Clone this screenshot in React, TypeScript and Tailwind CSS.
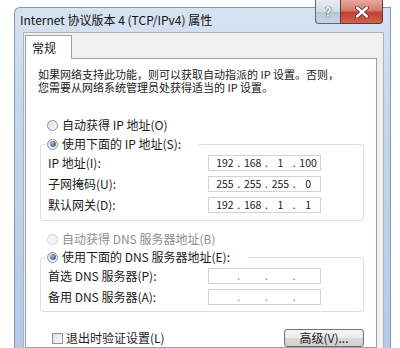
import { Fragment } from 'react'

const cjk = "font-['Noto_Sans_CJK_SC','Noto_Sans',sans-serif]"

function Radio({ checked, disabled }: { checked?: boolean; disabled?: boolean }) {
  return (
    <span
      className={
        disabled
          ? 'flex h-[11px] w-[11px] shrink-0 items-center justify-center rounded-full border border-[#cdd1d5] bg-[#f3f4f5]'
          : 'flex h-[11px] w-[11px] shrink-0 items-center justify-center rounded-full border border-[#8c9096] bg-[linear-gradient(135deg,#d9dcdf,#fbfbfb)]'
      }
    >
      {checked && (
        <span className="h-[6px] w-[6px] rounded-full bg-[radial-gradient(circle_at_35%_35%,#9cbcd8,#22466a)]" />
      )}
    </span>
  )
}

function IpBox({ parts }: { parts?: string[] }) {
  const p = parts ?? ['', '', '', '']
  return (
    <div className="flex h-[16px] w-[113px] items-center border border-[#cfd2d6] bg-white pl-[4px] text-[10.5px] leading-none text-[#222]">
      {p.map((v, i) => (
        <Fragment key={i}>
          {i > 0 && <span className={parts ? 'w-[4px] text-center' : 'w-[4px] text-center text-[#777]'}>.</span>}
          <span className="w-[25px] text-center">{v}</span>
        </Fragment>
      ))}
    </div>
  )
}

function Row({ label, parts }: { label: string; parts?: string[] }) {
  return (
    <div className="flex h-[16px] items-center">
      <span className="w-[160px] text-[12px] leading-none">{label}</span>
      <IpBox parts={parts} />
    </div>
  )
}

export default function App() {
  return (
    <div className={`relative h-[348px] w-[400px] overflow-hidden bg-white pl-[14px] pt-[7px] text-[#1a1a1a] ${cjk}`}>
      {/* window frame */}
      <div className="flex h-[341px] w-[377px] flex-col rounded-tl-[6px] border-l border-r border-t border-[#8396ab] bg-[linear-gradient(180deg,#d6e3f1_0%,#c4d7ed_30%,#b4cae6_100%)]">
        <div className="flex h-[24px] items-center pl-[5px] text-[12px] leading-none text-[#111]">
          Internet 协议版本 4 (TCP/IPv4) 属性
        </div>

        {/* client area */}
        <div className="ml-[8px] flex w-[361px] flex-1 flex-col border-l border-r border-t border-[#a9b4c0] bg-[#f0f0f0] pl-[1px] pr-[6px] pt-[2px]">
          <div className="relative z-10 -mb-px flex h-[24px] w-[47px] items-center border border-b-0 border-[#9aa0a8] bg-white pl-[6px] text-[12px] leading-none">
            常规
          </div>

          <div className="flex flex-1 flex-col border border-[#9aa0a8] bg-white">
            <div className="ml-[12px] mt-[10px] flex flex-col gap-[2px] text-[11px]">
              <div className="h-[11px] leading-[11px]">如果网络支持此功能，则可以获取自动指派的 IP 设置。否则，</div>
              <div className="h-[11px] leading-[11px]">您需要从网络系统管理员处获得适当的 IP 设置。</div>
            </div>

            <div className="mt-[25px] flex h-[14px] items-center gap-[4px] pl-[21px] text-[12px] leading-none">
              <Radio />
              <span>自动获得 IP 地址(O)</span>
            </div>

            <fieldset className="ml-[14px] mt-[5px] w-[324px] rounded-[3px] border border-[#d5dfe5]">
              <legend className="ml-[5px] flex h-[14px] items-center gap-[4px] pl-[1px] pr-[18px] text-[12px] leading-none">
                <Radio checked />
                <span>使用下面的 IP 地址(S):</span>
              </legend>
              <div className="flex flex-col gap-[5px] pb-[7px] pl-[7px] pt-[4px]">
                <Row label="IP 地址(I):" parts={['192', '168', '1', '100']} />
                <Row label="子网掩码(U):" parts={['255', '255', '255', '0']} />
                <Row label="默认网关(D):" parts={['192', '168', '1', '1']} />
              </div>
            </fieldset>

            <div className="mt-[11px] flex h-[14px] items-center gap-[4px] pl-[21px] text-[12px] leading-none text-[#8d8d8d]">
              <Radio disabled />
              <span>自动获得 DNS 服务器地址(B)</span>
            </div>

            <fieldset className="ml-[14px] mt-[4px] w-[324px] rounded-[3px] border border-[#d5dfe5]">
              <legend className="ml-[5px] flex h-[14px] items-center gap-[4px] pl-[1px] pr-[18px] text-[12px] leading-none">
                <Radio checked />
                <span>使用下面的 DNS 服务器地址(E):</span>
              </legend>
              <div className="flex flex-col gap-[5px] pb-[6px] pl-[7px] pt-[4px]">
                <Row label="首选 DNS 服务器(P):" />
                <Row label="备用 DNS 服务器(A):" />
              </div>
            </fieldset>

            <div className="mt-[17px] flex h-[18px] items-center justify-between pl-[26px] pr-[12px] text-[12px] leading-none">
              <div className="flex items-center gap-[3px]">
                <span className="h-[11px] w-[11px] border border-[#8f9399] bg-[linear-gradient(135deg,#dcdfe2,#fafafa)]" />
                <span>退出时验证设置(L)</span>
              </div>
              <button className="flex h-[18px] w-[80px] items-center justify-center rounded-[3px] border border-[#707070] bg-[linear-gradient(180deg,#f4f4f4_0%,#ebebeb_50%,#dcdcdc_51%,#cfcfcf_100%)] text-[12px] leading-none">
                高级(V)...
              </button>
            </div>
          </div>
        </div>
      </div>

      {/* caption buttons */}
      <div className="absolute left-[315px] top-0 flex h-[24px]">
        <div className="flex h-[24px] w-[25px] items-center justify-center rounded-bl-[4px] border border-r-0 border-t-0 border-[#5d6774] bg-[linear-gradient(180deg,#e4ebf3_0%,#cfdbe8_50%,#b5c6d9_51%,#c4d4e6_100%)] text-[13px] font-bold leading-none text-white [text-shadow:0_0_1px_#333,0_0_1px_#333]">
          ?
        </div>
        <div className="flex h-[24px] w-[43px] items-center justify-center rounded-br-[4px] border border-t-0 border-[#5d3a36] bg-[linear-gradient(180deg,#e8a99f_0%,#d77a6c_45%,#c2412f_55%,#d0624f_100%)]">
          <svg width="14" height="12" viewBox="0 0 14 12">
            <path d="M2 1.5 L12 10.5 M12 1.5 L2 10.5" stroke="#5a2a24" strokeWidth="4" strokeLinecap="round" />
            <path d="M2 1.5 L12 10.5 M12 1.5 L2 10.5" stroke="#ffffff" strokeWidth="2.4" strokeLinecap="round" />
          </svg>
        </div>
      </div>
    </div>
  )
}
